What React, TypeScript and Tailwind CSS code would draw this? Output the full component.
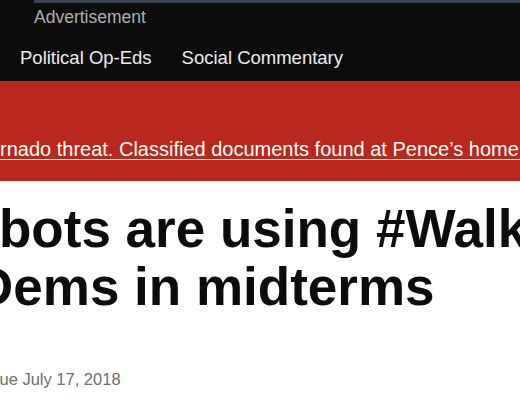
import React from "react";

const navItems = ["Political Op-Eds", "Social Commentary"];

const App: React.FC = () => {
  return (
    <div className="w-[520px] h-[417px] overflow-hidden bg-white font-['Liberation_Sans',Arial,sans-serif]">
      {/* top bar: ad slot + section nav */}
      <header className="h-[81px] bg-[#0c0c0c] overflow-hidden">
        <div className="ml-[34px] h-[3px] bg-[#3a4351]" />
        <div className="mt-[4px] pl-[34px] text-[17.5px] leading-[20px] text-[#b0b0b0] whitespace-nowrap">
          Advertisement
        </div>
        <nav className="mt-[20px] flex gap-[30px] pl-[20px] text-[18.5px] leading-[22px] text-[#ececec] whitespace-nowrap">
          {navItems.map((item) => (
            <a key={item} href="#">
              {item}
            </a>
          ))}
        </nav>
      </header>

      {/* breaking news ticker */}
      <div className="h-[100px] bg-[#ba271c] pt-[56px] overflow-hidden">
        <a
          href="#"
          className="block whitespace-nowrap text-[20px] leading-[24px] text-white underline underline-offset-[3px] decoration-1"
        >
          rnado threat. Classified documents found at Pence’s home. Biden heads to the border
        </a>
      </div>

      {/* article head */}
      <article className="overflow-hidden">
        <h1 className="mt-[19px] font-bold text-[53px] leading-[58px] text-[#0c0c0c] whitespace-nowrap">
          <span className="block ml-[-1px]">bots are using #WalkAway</span>
          <span className="block ml-[-25px]">Dems in midterms</span>
        </h1>
        <p className="mt-[53px] ml-[-10px] text-[16.5px] leading-[20px] text-[#6e6e6e] whitespace-nowrap">
          Tue July 17, 2018
        </p>
      </article>
    </div>
  );
};

export default App;
